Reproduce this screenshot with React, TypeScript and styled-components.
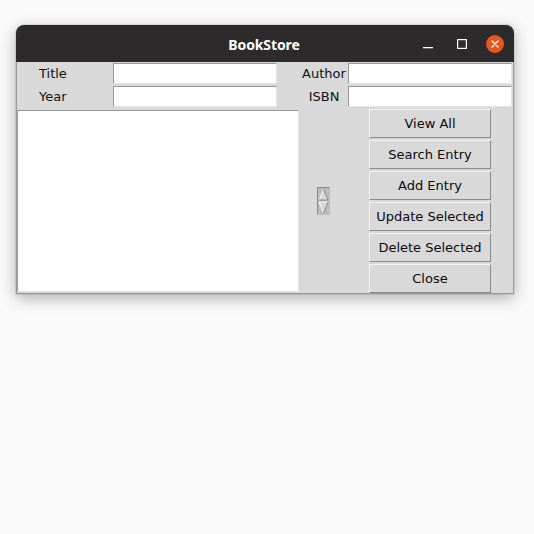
import React from "react";
import styled, { createGlobalStyle } from "styled-components";

const Global = createGlobalStyle`
  html, body { margin: 0; padding: 0; background: #fafafa; }
  body { font-family: "DejaVu Sans", sans-serif; }
`;

const Page = styled.div`
  padding: 25px 0 0 16px;
  width: 534px;
  height: 534px;
  box-sizing: border-box;
`;

const Window = styled.div`
  width: 498px;
  border-radius: 8px 8px 0 0;
  box-shadow: 0 4px 16px rgba(0, 0, 0, 0.3), 0 0 0 1px rgba(0, 0, 0, 0.08);
  display: flex;
  flex-direction: column;
`;

const TitleBar = styled.div`
  height: 37px;
  background: #2c2a2a;
  border-radius: 8px 8px 0 0;
  display: grid;
  grid-template-columns: 1fr auto 1fr;
  align-items: center;
  color: #fff;
`;

const Title = styled.div`
  grid-column: 2;
  font-family: "Noto Sans", sans-serif;
  font-weight: 700;
  font-size: 14px;
  letter-spacing: -0.1px;
  padding-top: 1px;
  padding-right: 2px;
`;

const Controls = styled.div`
  grid-column: 3;
  justify-self: end;
  display: flex;
  align-items: center;
  padding-right: 10px;
`;

const CtrlBtn = styled.div`
  width: 34px;
  height: 24px;
  display: flex;
  align-items: center;
  justify-content: center;
`;

const CloseCircle = styled.div`
  width: 18px;
  height: 18px;
  border-radius: 50%;
  background: #e95420;
  display: flex;
  align-items: center;
  justify-content: center;
  margin-left: 7px;
`;

const Content = styled.div`
  background: #d9d9d9;
  border: 1px solid #9a9a9a;
  border-top: none;
  padding: 1px 0 0 0;
  display: flex;
  flex-direction: column;
  height: 232px;
  box-sizing: border-box;
`;

const Form = styled.div`
  display: grid;
  grid-template-columns: 96px 164px 71px 164px;
  grid-template-rows: 21px 21px;
  row-gap: 2px;
`;

const Label = styled.div<{ $col: "left" | "right" }>`
  font-size: 13px;
  color: #111;
  display: flex;
  align-items: center;
  ${(p) =>
    p.$col === "left"
      ? "padding-left: 22px;"
      : "justify-content: center; width: 48px; justify-self: end; padding-left: 1px;"}
`;

const Entry = styled.input`
  box-sizing: border-box;
  width: 100%;
  height: 21px;
  margin: 0;
  padding: 0 2px;
  background: #fff;
  border: 1px solid;
  border-color: #999 #e4e4e4 #e4e4e4 #999;
  outline: none;
  font-family: "DejaVu Sans", sans-serif;
  font-size: 13px;
`;

const Lower = styled.div`
  display: flex;
  margin-top: 2px;
`;

const ListBox = styled.div`
  box-sizing: border-box;
  width: 282px;
  height: 182px;
  margin-top: 1px;
  background: #fff;
  border: 1px solid;
  border-color: #999 #e4e4e4 #e4e4e4 #999;
`;

const ScrollArea = styled.div`
  width: 70px;
  display: flex;
  align-items: center;
  padding-left: 18px;
  box-sizing: border-box;
`;

const Buttons = styled.div`
  display: flex;
  flex-direction: column;
  gap: 2px;
  width: 122px;
`;

const Button = styled.button`
  box-sizing: border-box;
  height: 29px;
  width: 122px;
  margin: 0;
  padding: 0;
  background: #d9d9d9;
  border: 1px solid;
  border-color: #f4f4f4 #8a8a8a #8a8a8a #f4f4f4;
  font-family: "DejaVu Sans", sans-serif;
  font-size: 13px;
  color: #0a0a0a;
`;

const ScrollBar = () => (
  <svg width="13" height="28" viewBox="0 0 13 28">
    <rect x="0" y="0" width="13" height="28" fill="#bdbdbd" />
    <path d="M0.5 27.5 V0.5 H12.5" fill="none" stroke="#8a8a8a" />
    <polygon points="6.5,2 11,13 2,13" fill="#d9d9d9" />
    <polyline points="2,13 6.5,2" fill="none" stroke="#f4f4f4" />
    <polyline points="6.5,2 11,13 2,13" fill="none" stroke="#8a8a8a" />
    <polygon points="2,15 11,15 6.5,26" fill="#d9d9d9" />
    <polyline points="2,15 11,15" fill="none" stroke="#f4f4f4" />
    <polyline points="2,15 6.5,26" fill="none" stroke="#f4f4f4" />
    <polyline points="11,15 6.5,26" fill="none" stroke="#8a8a8a" />
  </svg>
);

const buttons = ["View All", "Search Entry", "Add Entry", "Update Selected", "Delete Selected", "Close"];

export default function App() {
  return (
    <Page>
      <Global />
      <Window>
        <TitleBar>
          <Title>BookStore</Title>
          <Controls>
            <CtrlBtn>
              <svg width="10" height="10" viewBox="0 0 10 10">
                <rect x="0" y="8" width="10" height="1.3" fill="#fff" />
              </svg>
            </CtrlBtn>
            <CtrlBtn>
              <svg width="10" height="10" viewBox="0 0 10 10">
                <rect x="0.6" y="0.6" width="8.8" height="8.8" fill="none" stroke="#fff" strokeWidth="1.2" />
              </svg>
            </CtrlBtn>
            <CloseCircle>
              <svg width="8" height="8" viewBox="0 0 8 8">
                <path d="M1 1 L7 7 M7 1 L1 7" stroke="#fff" strokeWidth="1.4" strokeLinecap="round" />
              </svg>
            </CloseCircle>
          </Controls>
        </TitleBar>
        <Content>
          <Form>
            <Label $col="left">Title</Label>
            <Entry />
            <Label $col="right">Author</Label>
            <Entry />
            <Label $col="left">Year</Label>
            <Entry />
            <Label $col="right">ISBN</Label>
            <Entry />
          </Form>
          <Lower>
            <ListBox />
            <ScrollArea>
              <ScrollBar />
            </ScrollArea>
            <Buttons>
              {buttons.map((b) => (
                <Button key={b}>{b}</Button>
              ))}
            </Buttons>
          </Lower>
        </Content>
      </Window>
    </Page>
  );
}
